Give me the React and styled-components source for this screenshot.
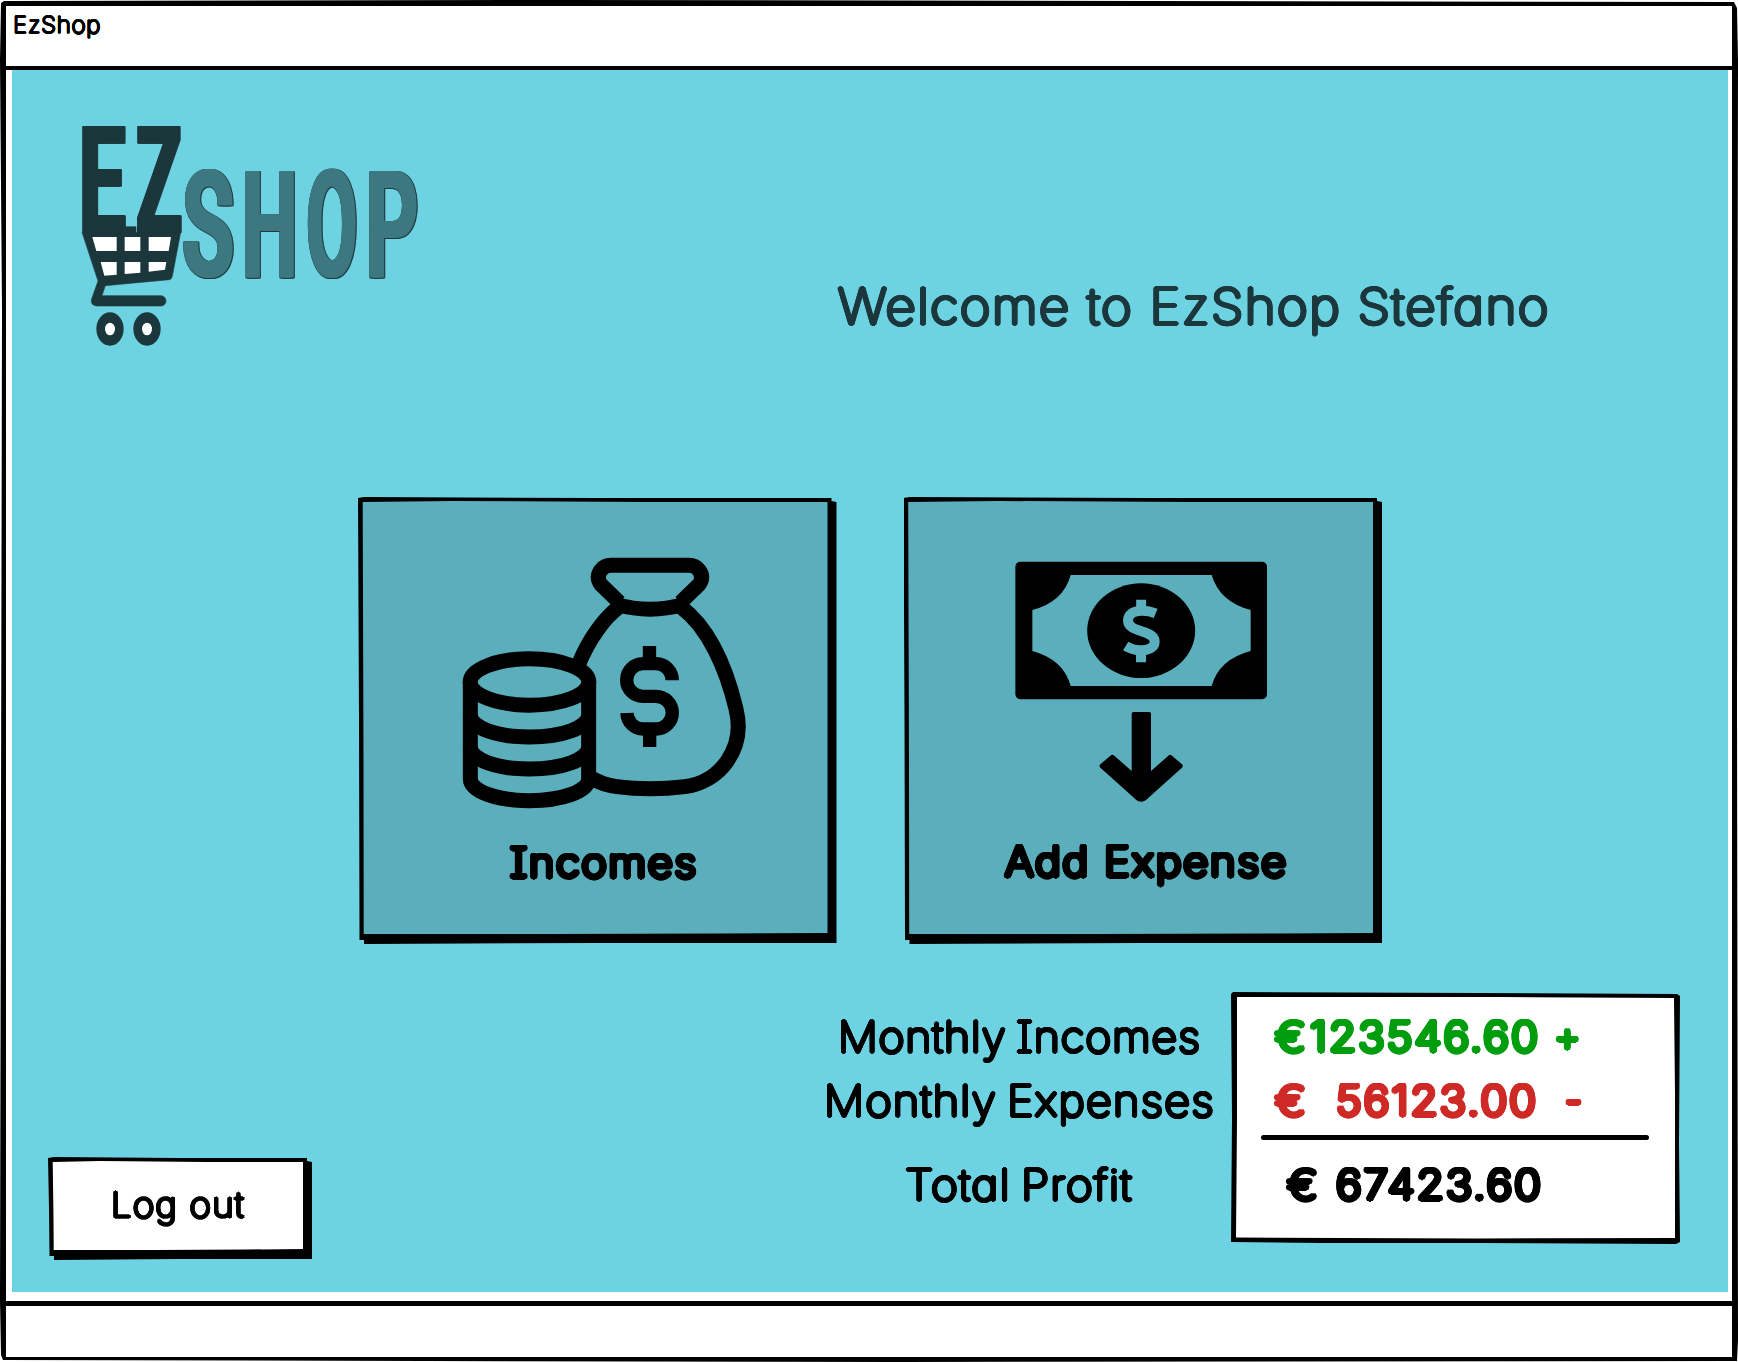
import React, { useLayoutEffect, useRef, useState } from "react";
import styled, { createGlobalStyle, css } from "styled-components";

const colors = {
  ink: "#000000",
  paper: "#ffffff",
  water: "#6dd3e2",
  tile: "#5bafbd",
  deep: "#1d383d",
  logoDark: "#1c373c",
  logoMid: "#3d7880",
  gain: "#009e0f",
  loss: "#cf2a27",
};

/* Rounds and thickens light glyphs, like a felt-tip pen. */
const pen = (radius) => {
  const shadows = [];
  [radius, radius * 0.5].forEach((r) => {
    for (let i = 0; i < 16; i += 1) {
      const a = (i * Math.PI) / 8;
      shadows.push(`${(Math.cos(a) * r).toFixed(2)}px ${(Math.sin(a) * r).toFixed(2)}px 0 currentColor`);
    }
  });
  return shadows.join(", ");
};

const GlobalStyle = createGlobalStyle`
  * { box-sizing: border-box; }
  body { margin: 0; background: ${colors.paper}; overflow: hidden; }
`;

const Window = styled.div`
  display: flex;
  flex-direction: column;
  gap: 4px;
  width: 1738px;
  height: 1362px;
  padding: 6px 6px 5px;
  background: ${colors.ink};
  clip-path: polygon(4px 1px, 560px 0, 1734px 2px, 1737px 8px, 1738px 60px, 1737px 700px, 1738px 1340px, 1737px 1361px, 900px 1362px, 3px 1360px, 1px 1355px, 0 1300px, 2px 310px, 0 60px, 1px 3px);
`;

const TitleBar = styled.header`
  height: 60px;
  padding: 4px 0 0 7px;
  background: ${colors.paper};
`;

const Body = styled.main`
  flex: 1;
  display: flex;
  padding: 0 4px 9px 6px;
  background: ${colors.paper};
`;

const StatusBar = styled.footer`
  height: 51px;
  margin-top: 1px;
  background: ${colors.paper};
`;

const Screen = styled.div`
  flex: 1;
  display: flex;
  flex-direction: column;
  background: ${colors.water};
`;

const Hero = styled.section`
  display: flex;
  align-items: flex-start;
  height: 427px;
  padding: 53px 0 0 68px;
`;

const LogoArt = styled.svg`
  display: block;
  width: 340px;
  height: 224px;
  flex: none;
  overflow: visible;
`;

const Greeting = styled.div`
  margin: 153px 0 0 418px;
`;

const Tiles = styled.section`
  display: flex;
  gap: 67px;
  padding-left: 346px;
`;

const sketchBox = css`
  position: relative;
  isolation: isolate;
  border: 0;
  background: none;
  &::before,
  &::after {
    content: "";
    position: absolute;
    inset: 0;
    z-index: -1;
  }
  &::before {
    background: ${colors.ink};
  }
`;

const raised = css`
  ${sketchBox}
  &::before {
    z-index: -2;
    clip-path: polygon(0 1px, 6px 0, 50% 1px, calc(100% - 5px) 1px, calc(100% - 5px) 4px, 100% 5px, 100% calc(100% - 1px), 50% calc(100% - 1px), 6px 100%, 6px calc(100% - 4px), 1.5px calc(100% - 4px), 1px 50%);
  }
  &::after {
    background: ${(p) => p.$fill};
    clip-path: polygon(4.7px 5px, 20% 4px, 60% 5px, calc(100% - 9px) 5px, calc(100% - 9px) calc(100% - 11px), 75% calc(100% - 10.5px), 40% calc(100% - 10px), 5.7px calc(100% - 10px), 5.5px 60%);
  }
`;

const Tile = styled.button`
  ${raised}
  display: flex;
  flex-direction: column;
  align-items: center;
  width: 478.5px;
  height: 447px;
  padding: ${(p) => p.$top}px 0 0;
`;

const TileIcon = styled.svg`
  display: block;
  flex: none;
  width: ${(p) => p.$w}px;
  height: ${(p) => p.$h}px;
  margin: 0 0 ${(p) => p.$gap}px ${(p) => p.$shift}px;
`;

const TileLabel = styled.span`
  padding-left: ${(p) => p.$shift}px;
`;

const Bottom = styled.section`
  display: flex;
  align-items: flex-start;
  padding: 48px 0 0 36px;
`;

const LogoutButton = styled.button`
  ${raised}
  width: 264px;
  height: 103px;
  margin-top: 165px;
  padding: 28px 0 0 63px;
  display: flex;
  align-items: flex-start;
`;

const Captions = styled.div`
  display: flex;
  flex-direction: column;
  align-items: center;
  width: 392px;
  margin-left: 511px;
  padding-top: 13px;
`;

const TotalCaption = styled.div`
  margin-top: 20px;
`;

const Summary = styled.div`
  ${sketchBox}
  width: 449px;
  height: 252px;
  margin-left: 16px;
  padding: 13px 0 0 44px;
  &::before {
    z-index: -2;
    clip-path: polygon(0 2px, 2px 0, 55% 1px, calc(100% - 3px) 2px, 100% 4px, calc(100% - 1px) 60%, 100% calc(100% - 2px), calc(100% - 4px) 100%, 55% calc(100% - 1px), 20% calc(100% - 1px), 0 calc(100% - 2px), 1px 50%);
  }
  &::after {
    background: ${colors.paper};
    clip-path: polygon(6px 5px, 60% 5px, calc(100% - 6px) 6px, calc(100% - 5px) 40%, calc(100% - 5px) calc(100% - 6px), 55% calc(100% - 5.5px), 5px calc(100% - 6.5px), 6px 50%);
  }
`;

const AmountRow = styled.div`
  display: flex;
  color: ${(p) => p.$color};
  padding-left: ${(p) => p.$indent || 0}px;
`;

const Figure = styled.span`
  margin-left: ${(p) => p.$gap}px;
`;

const Rule = styled.hr`
  width: 388px;
  height: 5px;
  margin: 2px 0 13px -14px;
  border: 0;
  border-radius: 3px;
  background: ${colors.ink};
`;

const Glyphs = styled.span`
  display: block;
  font-family: Inter, "Liberation Sans", sans-serif;
  font-weight: ${(p) => (p.$heavy ? 200 : 100)};
  font-feature-settings: "cv11", "cv08", "kern";
  white-space: pre;
  text-align: left;
  word-spacing: ${(p) => p.$words || 0}px;
  color: ${(p) => p.$color || "inherit"};
  font-size: ${(p) => p.$size}px;
  line-height: ${(p) => p.$line}px;
  text-shadow: ${(p) => pen(p.$pen)};
  transform-origin: 0 0;
`;

/* Fits its line to the given width, half by letter spacing, half by stretching. */
function Marker({ children, width, size, line, weight, color, heavy, words }) {
  const ref = useRef(null);
  const [fit, setFit] = useState({ gap: 0, stretch: 1 });
  useLayoutEffect(() => {
    const range = document.createRange();
    range.selectNodeContents(ref.current);
    const natural = range.getBoundingClientRect().width;
    const gap = ((width - natural) * 0.5) / children.length;
    setFit({ gap, stretch: width / (natural + gap * children.length) });
  }, [children, width]);
  return (
    <Glyphs
      ref={ref}
      $size={size}
      $line={line}
      $pen={weight}
      $color={color}
      $heavy={heavy}
      $words={words}
      style={{ letterSpacing: fit.gap, width, transform: `scaleX(${fit.stretch})` }}
    >
      {children}
    </Glyphs>
  );
}

const Caption = ({ width, children }) => (
  <Marker width={width} size={42.3} line={64} weight={1.9} words={-4} color={colors.ink}>{children}</Marker>
);

const Bold = ({ width, line = 64, children }) => (
  <Marker heavy width={width} size={40.5} line={line} weight={2.5}>{children}</Marker>
);

const LogoLetter = styled.text`
  font-family: Roboto, sans-serif;
  font-weight: 400;
  font-size: 423px;
  stroke-width: 18px;
`;

const logoLetters = [
  { ch: "E", x: 246, w: 132, y: 687, fill: colors.logoDark },
  { ch: "Z", x: 408, w: 135, y: 687, fill: colors.logoDark },
  { ch: "S", x: 547, w: 153, y: 820, fill: colors.logoMid },
  { ch: "H", x: 735, w: 149, y: 820, fill: colors.logoMid },
  { ch: "O", x: 921, w: 149, y: 820, fill: colors.logoMid },
  { ch: "P", x: 1107, w: 147, y: 820, fill: colors.logoMid },
];

/* Narrows every letter to its slot, from the inked bounds of the glyph. */
function Lettering() {
  const [bounds, setBounds] = useState({});
  useLayoutEffect(() => {
    const pencil = document.createElement("canvas").getContext("2d");
    pencil.font = "400 423px Roboto, sans-serif";
    const next = {};
    logoLetters.forEach(({ ch }) => {
      const m = pencil.measureText(ch);
      next[ch] = { left: -m.actualBoundingBoxLeft, right: m.actualBoundingBoxRight };
    });
    setBounds(next);
  }, []);
  return logoLetters.map(({ ch, x, w, y, fill }) => {
    const { left, right } = bounds[ch] || { left: 20, right: 220 };
    const k = (w - 13) / (right - left + 18);
    return (
      <LogoLetter key={ch} fill={fill} stroke={fill} transform={`translate(${x + 6.5 - (left - 9) * k} ${y}) scale(${k} 1)`}>
        {ch}
      </LogoLetter>
    );
  });
}

function Logo() {
  return (
    <LogoArt viewBox="240 368 1020 672">
      <defs>
        <filter id="broaden" filterUnits="userSpaceOnUse" x="220" y="340" width="1060" height="520" colorInterpolationFilters="sRGB">
          <feOffset in="SourceGraphic" dx="-5" result="l" />
          <feOffset in="SourceGraphic" dx="5" result="r" />
          <feMerge result="wide">
            <feMergeNode in="l" />
            <feMergeNode in="r" />
            <feMergeNode in="SourceGraphic" />
          </feMerge>
          <feColorMatrix in="wide" values="0 0 0 0 0.12  0 0 0 0 0.2  0 0 0 0 0.22  0 0 0 0.8 0" result="dark" />
          <feOffset in="dark" dx="-1.500" dy="-1.500" result="d1" />
          <feOffset in="dark" dx="1.500" dy="1.500" result="d2" />
          <feOffset in="dark" dx="-1.500" dy="1.500" result="d3" />
          <feOffset in="dark" dx="1.500" dy="-1.500" result="d4" />
          <feMerge>
            <feMergeNode in="d1" />
            <feMergeNode in="d2" />
            <feMergeNode in="d3" />
            <feMergeNode in="d4" />
            <feMergeNode in="wide" />
          </feMerge>
        </filter>
      </defs>
      <path
        d="M246 696H377V679H408V696H542L517 828Q515 837 508 838L316 856L306 886H483A15 15.500 0 0 1 483 917H290Q272 915 274 898L294 842Z"
        fill={colors.logoDark}
        stroke="#25454a"
        strokeWidth="2"
      />
      <g fill={colors.paper}>
        <path d="M277 710H350V752H289Z" />
        <path d="M374 710H421V752H374Z" />
        <path d="M446 710H513L506 752H446Z" />
        <path d="M302 785H350V823L313 826Z" />
        <path d="M374 785H421V817L374 821Z" />
        <path d="M446 785H499L495 808L446 814Z" />
      </g>
      {[330, 441].map((cx) => (
        <g key={cx}>
          <ellipse cx={cx} cy="986" rx="41" ry="50" fill={colors.logoDark} />
          <ellipse cx={cx} cy="986" rx="15" ry="19" fill={colors.paper} />
        </g>
      ))}
      <g filter="url(#broaden)">
        <Lettering />
      </g>
    </LogoArt>
  );
}

function IncomeIcon() {
  return (
    <TileIcon viewBox="336 200 856 756" $w={285.3} $h={252} $gap={28.5} $shift={15} fill="none" stroke={colors.ink}>
      <g strokeWidth="45">
        <ellipse cx="538.500" cy="575" rx="178" ry="69.500" />
        <path d="M361 575V865C361 903 440 931 538.500 931S716 903 716 865V575" />
        <path d="M361 673C361 712 440 740 538.500 740S716 712 716 673" />
        <path d="M361 769C361 808 440 836 538.500 836S716 808 716 769" />
        <path d="M808 336L753 283Q737 261 753 239Q764 225 782 225H1018Q1036 225 1047 239Q1063 261 1047 283L992 336" />
        <path d="M800 342Q900 371 1000 342" />
        <path d="M806 351C760 385 715 452 688 517" />
        <path d="M994 351C1075 412 1128 530 1158 655C1188 775 1110 875 1005 889C940 897 860 897 800 889Q755 882 728 865" />
      </g>
      <g strokeWidth="40">
        <path d="M967 570A49 50 0 0 0 918 520H879A49 49 0 0 0 879 618H918A49 49 0 0 1 918 716H881A49 49 0 0 1 831 668" />
        <path d="M898.500 467V510M899 730V770" />
      </g>
    </TileIcon>
  );
}

function ExpenseIcon() {
  return (
    <TileIcon viewBox="375 214 758 724" $w={252.7} $h={241.3} $gap={34.6} $shift={-3} fill={colors.ink}>
      <rect x="376" y="216" width="755" height="413" rx="15" />
      <path
        d="M542 256H965Q989 337 1082 361V484Q987 509 965 589H542Q520 509 427 484V361Q520 337 542 256Z"
        fill={colors.tile}
      />
      <ellipse cx="753.500" cy="423" rx="162" ry="142" />
      <g fill="none" stroke={colors.tile} strokeWidth="30" strokeLinejoin="round">
        <path d="M797 371Q775 362 753 363C728 364 714 376 714 392C714 412 733 418 755 425C780 432 794 440 794 456C794 472 778 482 753 482Q728 482 707 469" />
        <path d="M753.500 330V360M753 487V518" />
      </g>
      <path d="M730 667H778Q783 667 783 672V844L835 798Q840 793 846 798L876 824Q881 829 876 834L768 931Q762 936 753 936T739 931L631 834Q626 829 631 824L661 798Q667 793 673 798L725 844V672Q725 667 730 667Z" />
    </TileIcon>
  );
}

export default function App() {
  return (
    <>
      <GlobalStyle />
      <Window>
        <TitleBar>
          <Marker width={88} size={23.2} line={30} weight={0.9}>EzShop</Marker>
        </TitleBar>
        <Body>
          <Screen>
            <Hero>
              <Logo />
              <Greeting>
                <Marker width={712} size={49.3} line={60} weight={2.1} color={colors.deep}>
                  Welcome to EzShop Stefano
                </Marker>
              </Greeting>
            </Hero>
            <Tiles>
              <Tile $fill={colors.tile} $top={60}>
                <IncomeIcon />
                <TileLabel $shift={14}>
                  <Bold width={188} line={50}>Incomes</Bold>
                </TileLabel>
              </Tile>
              <Tile $fill={colors.tile} $top={64}>
                <ExpenseIcon />
                <TileLabel $shift={7}>
                  <Bold width={283} line={50}>Add Expense</Bold>
                </TileLabel>
              </Tile>
            </Tiles>
            <Bottom>
              <LogoutButton $fill={colors.paper}>
                <Marker width={134} size={34.4} line={40} weight={1.6} color={colors.ink}>Log out</Marker>
              </LogoutButton>
              <Captions>
                <Caption width={363}>Monthly Incomes</Caption>
                <Caption width={391}>Monthly Expenses</Caption>
                <TotalCaption>
                  <Caption width={228}>Total Profit</Caption>
                </TotalCaption>
              </Captions>
              <Summary>
                <AmountRow $color={colors.gain}>
                  <Bold width={35}>€</Bold>
                  <Figure $gap={0}><Bold width={230}>123546.60</Bold></Figure>
                  <Figure $gap={14}><Bold width={27}>+</Bold></Figure>
                </AmountRow>
                <AmountRow $color={colors.loss}>
                  <Bold width={35}>€</Bold>
                  <Figure $gap={26}><Bold width={202}>56123.00</Bold></Figure>
                  <Figure $gap={27}><Bold width={16}>-</Bold></Figure>
                </AmountRow>
                <Rule />
                <AmountRow $color={colors.ink} $indent={12}>
                  <Bold width={35}>€</Bold>
                  <Figure $gap={14}><Bold width={207}>67423.60</Bold></Figure>
                </AmountRow>
              </Summary>
            </Bottom>
          </Screen>
        </Body>
        <StatusBar />
      </Window>
    </>
  );
}
